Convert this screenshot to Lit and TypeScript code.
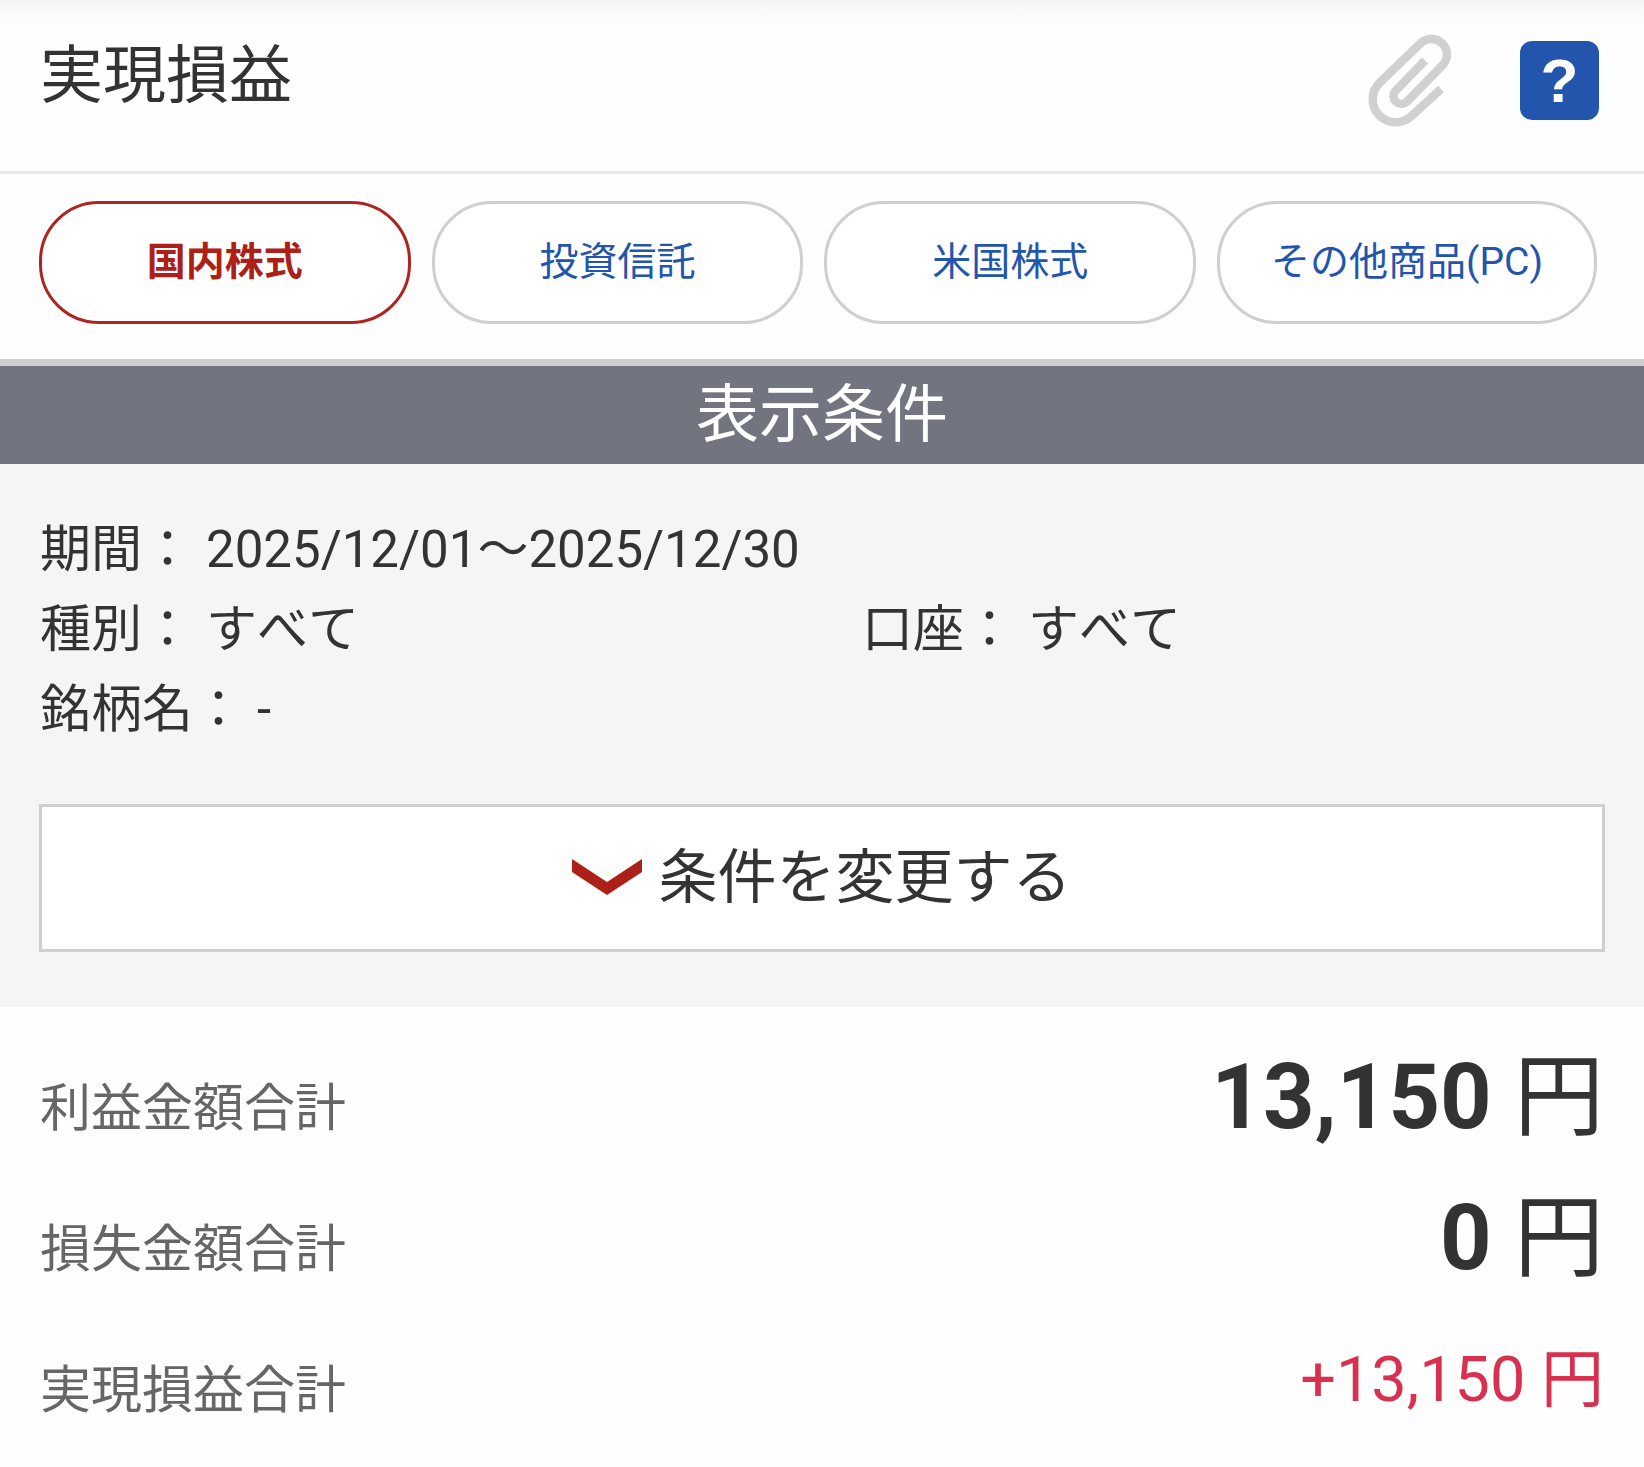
import { LitElement, html, css } from "lit";
import { customElement, state } from "lit/decorators.js";
import { classMap } from "lit/directives/class-map.js";

interface Total {
  label: string;
  amount: string;
  gain?: boolean;
}

const TABS = ["国内株式", "投資信託", "米国株式", "その他商品(PC)"];

const TOTALS: Total[] = [
  { label: "利益金額合計", amount: "13,150" },
  { label: "損失金額合計", amount: "0" },
  { label: "実現損益合計", amount: "+13,150", gain: true },
];

@customElement("app-root")
export class AppRoot extends LitElement {
  static styles = css`
    :host {
      display: block;
      min-height: 100vh;
      background: #fefefe;
      color: #333;
      font-family: Roboto, "Noto Sans CJK JP", sans-serif;
      font-kerning: none;
    }
    *,
    *::before {
      box-sizing: border-box;
    }
    h1,
    h2,
    dl,
    dt,
    dd {
      margin: 0;
      font-weight: 400;
    }
    button {
      font-family: inherit;
      font-kerning: inherit;
      cursor: pointer;
    }
    .header {
      display: flex;
      align-items: flex-start;
      justify-content: space-between;
      padding: 32px 45px 43px 40px;
      border-bottom: 3px solid #e9e9e9;
      background: linear-gradient(#f3f3f3, #fafafa 12px, #fefefe 28px);
    }
    .title {
      font-size: 63px;
      line-height: 88px;
    }
    .tools {
      display: flex;
      gap: 68px;
    }
    .tool {
      display: block;
      padding: 0;
      border: 0;
      background: none;
    }
    .clip {
      display: block;
      width: 84px;
      height: 96px;
    }
    .help {
      width: 79px;
      height: 79px;
      margin-top: 9px;
      border-radius: 12px;
      background: #2355ad;
      color: #fff;
      font-family: "Liberation Sans", sans-serif;
      font-size: 62px;
      font-weight: 700;
      line-height: 79px;
      text-align: center;
    }
    .tabs {
      display: grid;
      grid-template-columns: 1fr 1fr 1fr auto;
      gap: 21px;
      padding: 27px 47px 35px 39px;
      border-bottom: 7px solid #cfcfcf;
    }
    .tab {
      height: 123px;
      padding: 0 51px 2px;
      border: 3px solid #cfcfcf;
      border-radius: 60px;
      background: #fff;
      color: #2355ad;
      font-size: 39px;
      line-height: 52px;
      white-space: nowrap;
    }
    .tab.active {
      border-color: #ad2420;
      color: #ad2018;
      font-weight: 700;
    }
    .bar {
      background: #727580;
      color: #fff;
      font-size: 63px;
      line-height: 98px;
      text-align: center;
    }
    .conditions {
      padding-bottom: 55px;
      background: #f5f5f5;
    }
    .fields {
      display: grid;
      grid-template-columns: 1fr 1fr;
      padding: 46px 0 54px;
      font-size: 51px;
      line-height: 80px;
    }
    .field {
      display: flex;
      gap: 13px;
      padding-left: 40px;
    }
    .field.wide {
      grid-column: 1 / -1;
    }
    .change {
      display: flex;
      align-items: center;
      justify-content: center;
      gap: 16px;
      width: calc(100% - 78px);
      height: 148px;
      margin: 0 39px;
      padding: 0;
      border: 3px solid #cfcfcf;
      background: #fff;
      color: #333;
      font-size: 59px;
      line-height: 80px;
    }
    .chevron {
      display: block;
      width: 70px;
      height: 38px;
    }
    .totals {
      padding: 20px 40px 0;
    }
    .total {
      display: flex;
      align-items: center;
      justify-content: space-between;
      height: 141px;
    }
    .label {
      padding-top: 22px;
      color: #666;
      font-size: 51px;
      line-height: 80px;
    }
    .value {
      font-size: 90px;
      line-height: 120px;
    }
    .number {
      font-weight: 700;
    }
    .gain {
      color: #d8304f;
      font-size: 63px;
      line-height: 80px;
    }
    .gain .number {
      font-weight: 400;
    }
  `;

  @state() private active = 0;

  render() {
    return html`
      <header class="header">
        <h1 class="title">実現損益</h1>
        <div class="tools">
          <button class="tool" aria-label="添付">
            <svg class="clip" viewBox="0 0 84 96" fill="none" stroke="#d0d0d0" stroke-width="8.5">
              <path
                d="M57 28.5 L27.3 59 A7.9 7.9 0 0 0 38.3 70.2 L74.3 33.5 A15.5 15.5 0 0 0 52.3 11.5 L11.5 50.9 A23 23 0 0 0 44 83.5 L73 57"
              />
            </svg>
          </button>
          <button class="tool help" aria-label="ヘルプ">?</button>
        </div>
      </header>
      <nav class="tabs">
        ${TABS.map(
          (tab, i) => html`<button
            class=${classMap({ tab: true, active: i === this.active })}
            @click=${() => (this.active = i)}
          >
            ${tab}
          </button>`,
        )}
      </nav>
      <section class="conditions">
        <h2 class="bar">表示条件</h2>
        <dl class="fields">
          <div class="field wide"><dt>期間：</dt><dd>2025/12/01～2025/12/30</dd></div>
          <div class="field"><dt>種別：</dt><dd>すべて</dd></div>
          <div class="field"><dt>口座：</dt><dd>すべて</dd></div>
          <div class="field wide"><dt>銘柄名：</dt><dd>-</dd></div>
        </dl>
        <button class="change">
          <svg class="chevron" viewBox="0 0 70 38" fill="#ad2018">
            <path d="M0 0 L35 23 L70 0 V13 L35 36 L0 13Z" />
          </svg>
          条件を変更する
        </button>
      </section>
      <dl class="totals">
        ${TOTALS.map(
          (t) => html`<div class="total">
            <dt class="label">${t.label}</dt>
            <dd class=${classMap({ value: true, gain: !!t.gain })}>
              <span class="number">${t.amount}</span> 円
            </dd>
          </div>`,
        )}
      </dl>
    `;
  }
}
